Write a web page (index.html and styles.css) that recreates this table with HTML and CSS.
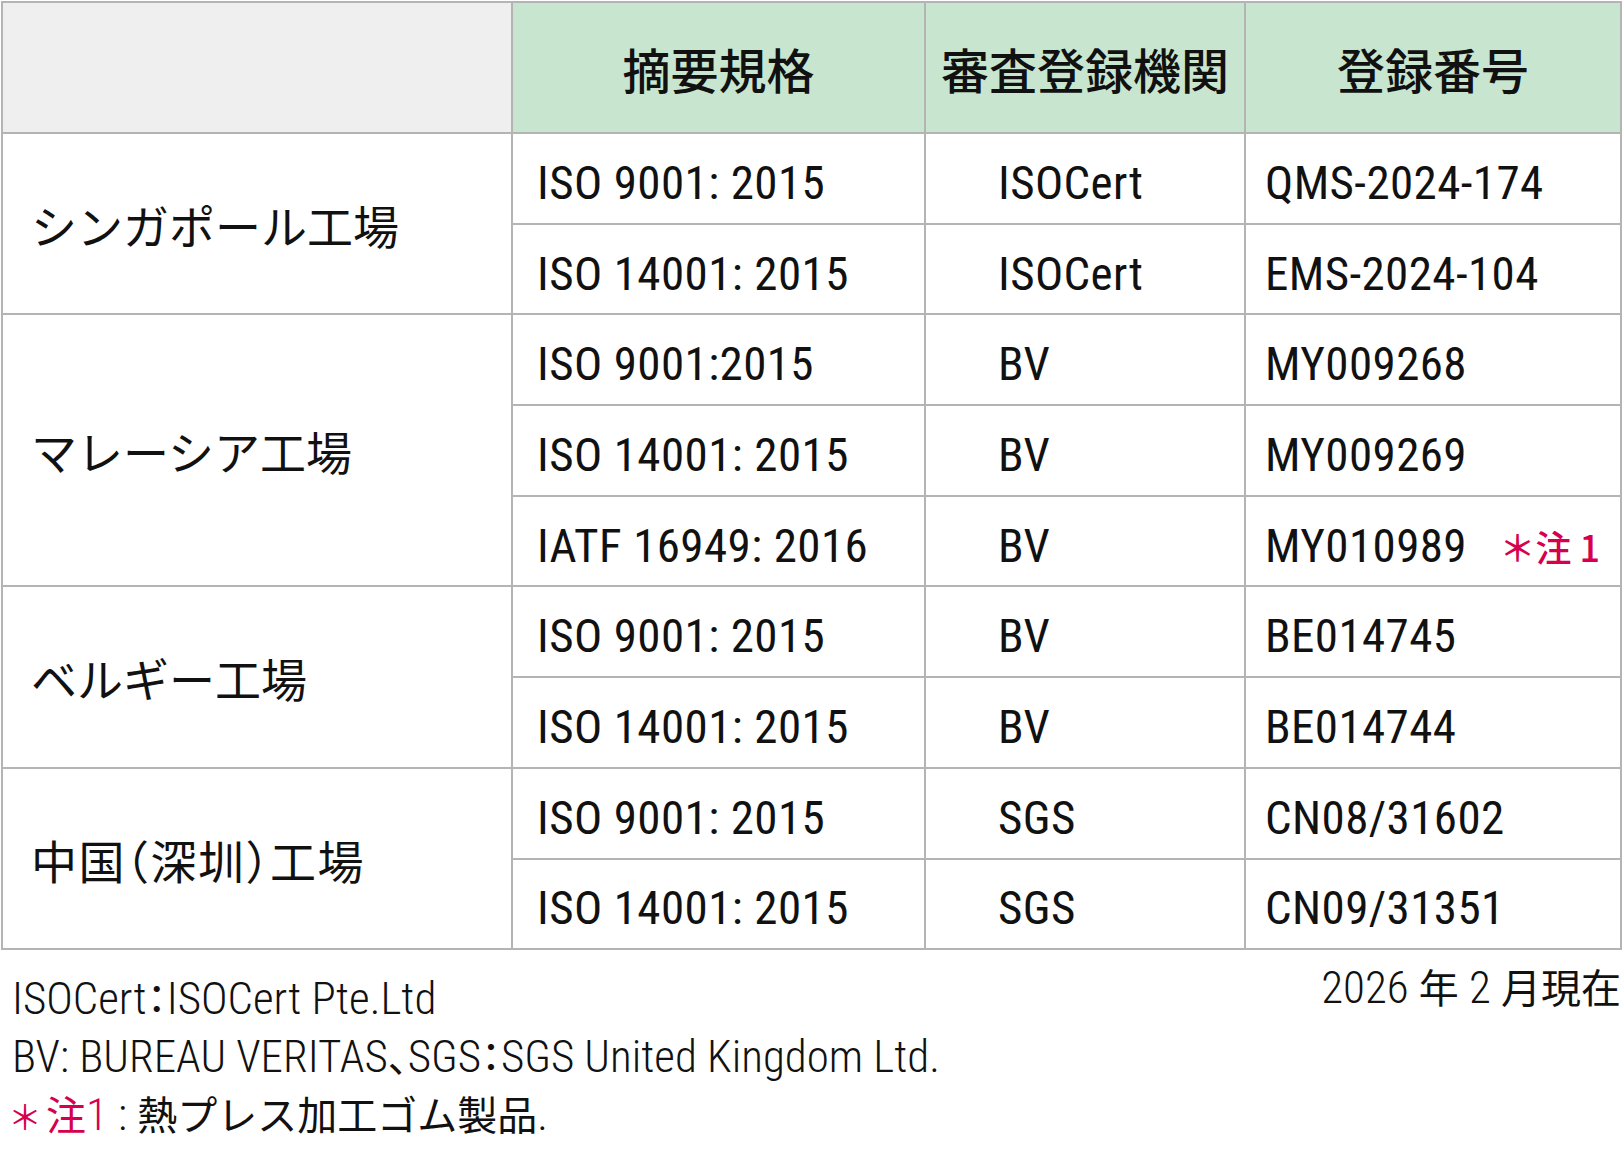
FILE: index.html
```html
<!DOCTYPE html>
<html lang="ja">
<head>
<meta charset="utf-8">
<title>認証取得状況</title>
<link rel="stylesheet" href="styles.css">
</head>
<body>
<div class="page">
  <table class="cert">
    <colgroup>
      <col class="c1"><col class="c2"><col class="c3"><col class="c4">
    </colgroup>
    <thead>
      <tr>
        <th class="blank"></th>
        <th>摘要規格</th>
        <th>審査登録機関</th>
        <th>登録番号</th>
      </tr>
    </thead>
    <tbody>
      <tr>
        <td class="site" rowspan="2">シンガポール工場</td>
        <td class="std">ISO 9001: 2015</td>
        <td class="org">ISOCert</td>
        <td class="no">QMS-2024-174</td>
      </tr>
      <tr>
        <td class="std">ISO 14001: 2015</td>
        <td class="org">ISOCert</td>
        <td class="no">EMS-2024-104</td>
      </tr>
      <tr>
        <td class="site" rowspan="3">マレーシア工場</td>
        <td class="std">ISO 9001:2015</td>
        <td class="org">BV</td>
        <td class="no">MY009268</td>
      </tr>
      <tr>
        <td class="std">ISO 14001: 2015</td>
        <td class="org">BV</td>
        <td class="no">MY009269</td>
      </tr>
      <tr>
        <td class="std">IATF 16949: 2016</td>
        <td class="org">BV</td>
        <td class="no"><div class="no-in"><span>MY010989</span><span class="mark">＊注 1</span></div></td>
      </tr>
      <tr>
        <td class="site" rowspan="2">ベルギー工場</td>
        <td class="std">ISO 9001: 2015</td>
        <td class="org">BV</td>
        <td class="no">BE014745</td>
      </tr>
      <tr>
        <td class="std">ISO 14001: 2015</td>
        <td class="org">BV</td>
        <td class="no">BE014744</td>
      </tr>
      <tr>
        <td class="site cn" rowspan="2">中国（深圳）工場</td>
        <td class="std">ISO 9001: 2015</td>
        <td class="org">SGS</td>
        <td class="no">CN08/31602</td>
      </tr>
      <tr>
        <td class="std">ISO 14001: 2015</td>
        <td class="org">SGS</td>
        <td class="no">CN09/31351</td>
      </tr>
    </tbody>
  </table>
  <div class="foot">
    <div class="notes">
      <p>ISOCert<span class="ja">：</span>ISOCert Pte.Ltd</p>
      <p>BV: BUREAU VERITAS<span class="ja">、</span>SGS<span class="ja">：</span>SGS United Kingdom Ltd.</p>
      <p><span class="red ja star">＊</span><span class="red ja">注</span><span class="red">1</span> : <span class="ja">熱プレス加工ゴム製品</span>.</p>
    </div>
    <div class="date">2026 <span class="ja">年</span> 2 <span class="ja">月現在</span></div>
  </div>
</div>
</body>
</html>
```
FILE: styles.css
```css
body {
  margin: 0;
  background: #ffffff;
  color: #111111;
}

.page {
  padding: 1px 0 0 1px;
  width: 1620px;
}

.cert {
  border-collapse: collapse;
  table-layout: fixed;
  width: 1619px;
  font-family: "Roboto Condensed", Roboto, "Noto Sans CJK JP", sans-serif;
}

.c1 { width: 510px; }
.c2 { width: 413px; }
.c3 { width: 320px; }
.c4 { width: 376px; }

.cert th,
.cert td {
  border: 2px solid #b4b4b4;
  padding: 0;
  vertical-align: middle;
}

.cert thead tr {
  height: 131px;
}

.cert thead th {
  background: #c8e6cf;
  font-family: "Noto Sans CJK JP", sans-serif;
  font-weight: 500;
  font-size: 48px;
  text-align: center;
  color: #111111;
}

.cert thead th.blank {
  background: #efefef;
}

.cert tbody tr {
  height: 90.7px;
}

.cert tbody td {
  font-size: 47px;
  letter-spacing: 0.4px;
  padding-top: 8px;
  color: #111111;
  white-space: nowrap;
}

.cert tbody td.site {
  font-family: "Noto Sans CJK JP", sans-serif;
  font-size: 46px;
  letter-spacing: 0;
  padding: 0 0 0 28px;
}

.cert tbody td.cn {
  font-feature-settings: "halt";
  letter-spacing: 1.5px;
}

.cert tbody td.std {
  padding-left: 24px;
}

.cert tbody td.org {
  padding-left: 72px;
}

.cert tbody td.no {
  padding-left: 19px;
  padding-right: 20px;
}

.no-in {
  display: flex;
  justify-content: space-between;
  align-items: baseline;
}

.mark {
  color: #d6004f;
  font-family: "Noto Sans CJK JP", sans-serif;
  font-weight: 500;
  font-size: 36px;
  letter-spacing: 0;
}

.foot {
  width: 1620px;
  display: flex;
  justify-content: space-between;
  align-items: flex-start;
  margin-top: 8px;
  font-family: "Roboto Condensed", "Noto Sans CJK JP", sans-serif;
  font-weight: 300;
  font-feature-settings: "halt";
  color: #111111;
}

.notes {
  padding: 11px 0 0 11px;
}

.notes p {
  margin: 0;
  font-size: 45px;
  line-height: 56px;
  white-space: nowrap;
}

.ja {
  font-family: "Noto Sans CJK JP", sans-serif;
  font-weight: 400;
  font-size: 40px;
}

.star {
  font-size: 34px;
  margin-left: -4px;
  margin-right: 4px;
}

.red {
  color: #d6004f;
}

.date {
  font-size: 45px;
  line-height: 56px;
  white-space: nowrap;
}
```
